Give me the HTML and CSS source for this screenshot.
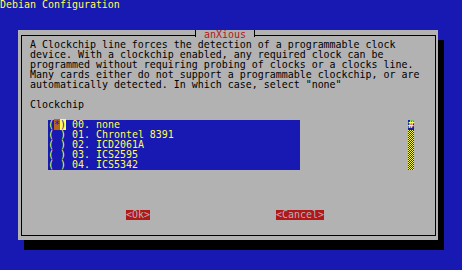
FILE: index.html
```html
<!DOCTYPE html>
<html lang="en">
	<head>
		<meta charset="UTF-8" />
		<title>Debian Configuration</title>
		<link rel="stylesheet" href="styles.css">
	</head>
	<body>
		<div class="screen">
			<div class="backtitle">Debian Configuration</div>

			<div class="dialog">
				<div class="title">anXious</div>
				<div class="frame">
					<p class="msg">A Clockchip line forces the detection of a programmable clock
device. With a clockchip enabled, any required clock can be
programmed without requiring probing of clocks or a clocks line.
Many cards either do not support a programmable clockchip, or are
automatically detected. In which case, select "none"</p>

					<div class="label">Clockchip</div>

					<div class="menu-row">
						<ul class="menu">
							<li>(<span class="cur">*</span><span class="hl">)</span> 00. none</li>
							<li>( ) 01. Chrontel 8391</li>
							<li>( ) 02. ICD2061A</li>
							<li>( ) 03. ICS2595</li>
							<li>( ) 04. ICS5342</li>
						</ul>
						<!-- scroll indicator -->
						<div class="scrollbar">
							<span class="thumb">#</span>
							<svg class="track" width="6" height="40" shape-rendering="crispEdges">
								<defs>
									<pattern id="checker" width="2" height="2" patternUnits="userSpaceOnUse">
										<rect width="2" height="2" fill="#1818b2" />
										<rect width="1" height="1" fill="#ffff54" />
										<rect x="1" y="1" width="1" height="1" fill="#ffff54" />
									</pattern>
								</defs>
								<rect width="6" height="40" fill="url(#checker)" />
							</svg>
						</div>
					</div>

					<div class="buttons">
						<span class="btn">&lt;Ok&gt;</span>
						<span class="btn">&lt;Cancel&gt;</span>
					</div>
				</div>
			</div>
		</div>
	</body>
</html>
```

FILE: styles.css
```css
body {
	margin: 0;
	background: #1818b2;
	font-family: 'DejaVu Sans Mono', monospace;
	font-size: 9.96px;
	line-height: 10px;
}
.screen {
	width: 462px;
	height: 270px;
	overflow: hidden;
}
.backtitle {
	color: #ffff54;
	height: 10px;
	white-space: pre;
}
.dialog {
	position: relative;
	display: flex;
	width: 420px;
	height: 210px;
	margin: 20px 0 0 18px;
	background: #b2b2b2;
	box-shadow: 6px 10px 0 #000;
}
.title {
	position: absolute;
	top: 0;
	left: 177px;
	box-sizing: border-box;
	width: 60px;
	height: 7px;
	padding-left: 8px;
	border-left: 1px solid #000;
	border-right: 1px solid #000;
	background: #b2b2b2;
	color: #b21818;
	white-space: pre;
}
.frame {
	flex: 1;
	margin: 5px 2px 4px 3px;
	padding: 4px 0 0 8px;
	border: 1px solid #000;
	color: #000;
}
.msg {
	margin: 0 0 10px;
	white-space: pre;
}
.label {
	margin-bottom: 10px;
}
.menu-row {
	display: flex;
	margin-left: 18px;
}
.menu {
	list-style: none;
	margin: 0;
	padding: 0;
	width: 252px;
	background: #1818b2;
	color: #ffff54;
}
.menu li {
	height: 10px;
	white-space: pre;
}
.cur {
	background: #b26818;
	color: #1818b2;
}
.hl {
	background: #ffff54;
	color: #1818b2;
}
.scrollbar {
	display: flex;
	flex-direction: column;
	width: 6px;
	margin-left: 108px;
}
.thumb {
	height: 10px;
	background: #1818b2;
	color: #ffff54;
	font-weight: bold;
}
.track {
	display: block;
}
.buttons {
	display: flex;
	gap: 126px;
	margin: 40px 0 0 96px;
}
.btn {
	background: #b21818;
	color: #b2b2b2;
	white-space: pre;
}
```
